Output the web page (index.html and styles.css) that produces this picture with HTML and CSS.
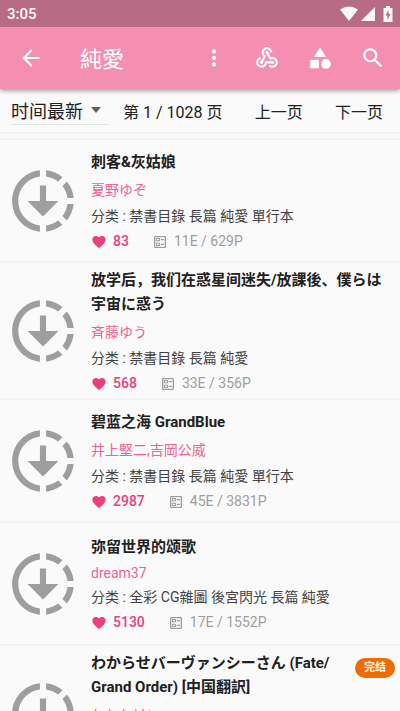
FILE: index.html
```html
<!DOCTYPE html>
<html lang="zh-CN">
<head>
<meta charset="utf-8">
<meta name="viewport" content="width=device-width, initial-scale=1">
<title>純愛</title>
<link rel="stylesheet" href="styles.css">
</head>
<body>
<svg class="defs" aria-hidden="true">
  <symbol id="downloading" viewBox="0 0 24 24"><path d="M18.32 4.26C16.84 3.05 15.01 2.25 13 2.05v2.02c1.46.18 2.79.76 3.9 1.62l1.42-1.43zM19.93 11h2.02c-.2-2.01-1-3.84-2.21-5.32L18.31 7.1c.86 1.11 1.44 2.44 1.62 3.9zM18.31 16.9l1.43 1.43c1.21-1.48 2.01-3.32 2.21-5.32h-2.02c-.18 1.45-.76 2.78-1.62 3.89zM13 19.93v2.02c2.01-.2 3.84-1 5.32-2.21l-1.43-1.43c-1.1.86-2.43 1.44-3.89 1.62zM13 12V7h-2v5H7l5 5 5-5h-4zM11 19.93v2.02C5.95 21.45 2 17.19 2 12s3.95-9.45 9-9.95v2.02C7.05 4.56 4 7.92 4 12s3.05 7.44 7 7.93z"/></symbol>
  <symbol id="heart" viewBox="0 0 24 24"><path d="M12 21.35l-1.45-1.32C5.4 15.36 2 12.28 2 8.5 2 5.42 4.42 3 7.5 3c1.74 0 3.41.81 4.5 2.09C13.09 3.81 14.76 3 16.5 3 19.58 3 22 5.42 22 8.5c0 3.78-3.4 6.86-8.55 11.54L12 21.35z"/></symbol>
  <symbol id="ballot" viewBox="0 0 24 24"><path fill-rule="evenodd" d="M5 3h14a2 2 0 0 1 2 2v14a2 2 0 0 1-2 2H5a2 2 0 0 1-2-2V5a2 2 0 0 1 2-2zm0 2v14h14V5zM6 6h6v5H6zm1.500 1.500v2h3v-2zM6 13h6v5H6zm1.500 1.500v2h3v-2zM13 7.500h5v2h-5zM13 14.500h5v2h-5z"/></symbol>
</svg>

<header class="top">
  <div class="status">
    <span>3:05</span>
    <div class="status-icons">
      <svg width="18" height="16" viewBox="0 0 18 16"><path d="M0 3.500Q9-2.500 18 3.500L9 15z"/></svg>
      <svg width="14" height="14" viewBox="0 0 14 14"><path d="M14 0v14H0z"/></svg>
      <svg class="battery" width="10" height="16" viewBox="0 0 10 16"><path fill-rule="evenodd" d="M3 0h4v2h2.500v14H.5V2H3zM5.500 4L2.500 9.500h2V14l3-6h-2z"/></svg>
    </div>
  </div>
  <div class="appbar">
    <button class="icon-button back" aria-label="返回"><svg viewBox="0 0 24 24"><path d="M20 11H7.830l5.590-5.590L12 4l-8 8 8 8 1.410-1.410L7.830 13H20v-2z"/></svg></button>
    <h1>純愛</h1>
    <button class="icon-button" aria-label="更多"><svg viewBox="0 0 24 24"><path d="M12 8c1.100 0 2-.9 2-2s-.9-2-2-2-2 .9-2 2 .9 2 2 2zm0 2c-1.100 0-2 .9-2 2s.9 2 2 2 2-.9 2-2-.9-2-2-2zm0 6c-1.100 0-2 .9-2 2s.9 2 2 2 2-.9 2-2-.9-2-2-2z"/></svg></button>
    <button class="icon-button" aria-label="线路"><svg viewBox="0 0 24 24"><g fill="none" stroke="currentColor" stroke-width="2"><path d="M16 7A4 4 0 1 0 9.900 10.400L7 16"/><path d="M6 12.130A4 4 0 1 0 11 16H17"/><path d="M14.200 18.850A4 4 0 1 0 15 12.540L12 7"/></g><circle cx="12" cy="7" r="1.500"/><circle cx="7" cy="16" r="1.500"/><circle cx="17" cy="16" r="1.500"/></svg></button>
    <button class="icon-button" aria-label="分类"><svg viewBox="0 0 24 24"><path d="M12 2l-5.500 9h11zM3 13.500h8v8H3z"/><circle cx="17.500" cy="17.500" r="4.500"/></svg></button>
    <button class="icon-button" aria-label="搜索"><svg viewBox="0 0 24 24"><path d="M15.500 14h-.79l-.28-.27A6.471 6.471 0 0 0 16 9.500 6.500 6.500 0 1 0 9.500 16c1.610 0 3.090-.59 4.230-1.570l.27.28v.79l5 4.990L20.490 19l-4.990-5zm-6 0C7.010 14 5 11.990 5 9.500S7.010 5 9.500 5 14 7.010 14 9.500 11.990 14 9.500 14z"/></svg></button>
  </div>
</header>

<nav class="pager" aria-label="分页">
  <div class="sort">
    <select aria-label="排序"><option>时间最新</option></select>
    <svg width="10" height="6" viewBox="0 0 10 6"><path d="M0 0h10L5 6z"/></svg>
  </div>
  <div class="pages">
    <span>第 1 / 1028 页</span>
    <button>上一页</button>
    <button>下一页</button>
  </div>
</nav>

<main>
  <ul class="comics">
    <li>
      <svg class="cover"><use href="#downloading"/></svg>
      <div class="info">
        <h2>刺客&amp;灰姑娘</h2>
        <p class="author">夏野ゆぞ</p>
        <p class="tags">分类 : 禁書目錄 長篇 純愛 單行本</p>
        <div class="stats"><span class="likes"><svg><use href="#heart"/></svg>83</span><span class="size"><svg><use href="#ballot"/></svg>11E / 629P</span></div>
      </div>
    </li>
    <li>
      <svg class="cover"><use href="#downloading"/></svg>
      <div class="info">
        <h2>放学后，我们在惑星间迷失/放課後、僕らは<br>宇宙に惑う</h2>
        <p class="author">斉藤ゆう</p>
        <p class="tags">分类 : 禁書目錄 長篇 純愛</p>
        <div class="stats"><span class="likes"><svg><use href="#heart"/></svg>568</span><span class="size"><svg><use href="#ballot"/></svg>33E / 356P</span></div>
      </div>
    </li>
    <li>
      <svg class="cover"><use href="#downloading"/></svg>
      <div class="info">
        <h2>碧蓝之海 GrandBlue</h2>
        <p class="author">井上堅二,吉岡公威</p>
        <p class="tags">分类 : 禁書目錄 長篇 純愛 單行本</p>
        <div class="stats"><span class="likes"><svg><use href="#heart"/></svg>2987</span><span class="size"><svg><use href="#ballot"/></svg>45E / 3831P</span></div>
      </div>
    </li>
    <li>
      <svg class="cover"><use href="#downloading"/></svg>
      <div class="info">
        <h2>弥留世界的颂歌</h2>
        <p class="author latin">dream37</p>
        <p class="tags">分类 : 全彩 CG雜圖 後宮閃光 長篇 純愛</p>
        <div class="stats"><span class="likes"><svg><use href="#heart"/></svg>5130</span><span class="size"><svg><use href="#ballot"/></svg>17E / 1552P</span></div>
      </div>
    </li>
    <li>
      <svg class="cover"><use href="#downloading"/></svg>
      <div class="info">
        <h2>わからせバーヴァンシーさん (Fate/<br>Grand Order) [中国翻訳]</h2>
        <p class="author">わわわけい</p>
        <p class="tags">分类 : 短篇 純愛</p>
        <div class="stats"><span class="likes"><svg><use href="#heart"/></svg>1024</span><span class="size"><svg><use href="#ballot"/></svg>1E / 30P</span></div>
      </div>
      <span class="badge">完结</span>
    </li>
  </ul>
</main>
</body>
</html>
```
FILE: styles.css
```css
* {
  box-sizing: border-box;
  margin: 0;
  padding: 0;
}

html,
body {
  height: 100%;
}

body {
  display: flex;
  flex-direction: column;
  overflow: hidden;
  background: #fafafa;
  color: #212121;
  font-family: Roboto, "Noto Sans CJK SC", sans-serif;
}

button,
select {
  border: 0;
  background: none;
  color: inherit;
  font: inherit;
  appearance: none;
}

svg {
  flex: none;
  fill: currentColor;
}

.defs {
  display: none;
}

.top {
  flex: none;
  position: relative;
  background: #f48fb1;
  color: #fff;
  box-shadow: 0 2px 4px rgba(0, 0, 0, 0.35);
}

.status {
  display: flex;
  align-items: center;
  justify-content: space-between;
  height: 27px;
  padding: 0 7px;
  background: #b76b85;
  color: #fafafa;
  font-size: 15px;
  font-weight: 500;
}

.status-icons {
  display: flex;
  align-items: center;
  gap: 3px;
}

.battery {
  margin-left: 5px;
}

.appbar {
  display: flex;
  align-items: center;
  height: 62px;
  padding-right: 1px;
}

.appbar h1 {
  flex: 1;
  padding-bottom: 3px;
  font-size: 22px;
  font-weight: 400;
}

.icon-button {
  display: flex;
  align-items: center;
  justify-content: center;
  width: 53px;
  height: 62px;
}

.icon-button svg {
  width: 26px;
  height: 26px;
}

.back {
  width: 62px;
  margin-right: 18px;
}

.pager {
  flex: none;
  display: flex;
  align-items: center;
  gap: 14px;
  height: 45px;
  padding: 0 17px 0 11px;
  border-bottom: 2px solid #f3f3f3;
  font-size: 16px;
}

.sort {
  display: flex;
  align-items: center;
  width: 98px;
  border-bottom: 1px solid #e4e4e4;
}

.sort select {
  width: 80px;
  height: 27px;
  padding-top: 3px;
  font-size: 18px;
}

.sort svg {
  color: #616161;
}

.pages {
  flex: 1;
  display: flex;
  align-items: center;
  justify-content: space-between;
}

main {
  flex: 1;
  min-height: 0;
  margin-top: 4px;
  overflow: hidden;
  border-top: 2px solid #f3f3f3;
}

.comics {
  list-style: none;
}

.comics li {
  position: relative;
  display: flex;
  align-items: center;
  min-height: 123px;
  padding: 2px 6px;
  border-bottom: 2px solid #f3f3f3;
}

.cover {
  width: 74px;
  height: 74px;
  margin-right: 11px;
  color: #9e9e9e;
}

.info {
  flex: 1;
  min-width: 0;
  padding-top: 3px;
  white-space: nowrap;
}

.info h2 {
  margin-bottom: 3px;
  font-size: 15px;
  font-weight: 700;
  line-height: 24px;
}

.author,
.tags {
  font-size: 14px;
  line-height: 26px;
}

.author {
  color: #f06292;
}

.latin {
  line-height: 22px;
}

.tags {
  color: #424242;
}

.stats {
  display: flex;
  align-items: center;
  gap: 23px;
  font-size: 14px;
  line-height: 25px;
}

.stats span {
  display: flex;
  align-items: center;
  gap: 6px;
}

.stats svg {
  width: 16px;
  height: 16px;
}

.likes {
  color: #ec407a;
  font-weight: 500;
}

.size {
  color: #9e9e9e;
}

.badge {
  position: absolute;
  top: 12px;
  right: 5px;
  padding: 0 9px;
  border-radius: 10px;
  background: #ef6c00;
  color: #fff;
  font-size: 11px;
  font-weight: 700;
  line-height: 20px;
}
```
